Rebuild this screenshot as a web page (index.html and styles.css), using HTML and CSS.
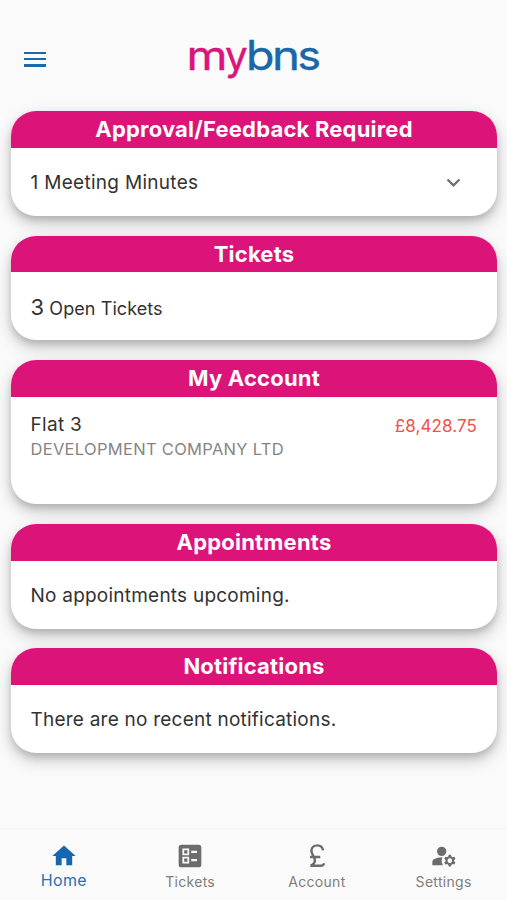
FILE: index.html
```html
<!DOCTYPE html>
<html lang="en">
<head>
<meta charset="utf-8">
<meta name="viewport" content="width=device-width, initial-scale=1">
<title>mybns</title>
<link rel="stylesheet" href="styles.css">
</head>
<body>
<div class="app">
  <header class="topbar">
    <button class="menu" aria-label="Menu"><span></span><span></span><span></span></button>
    <svg class="logo" viewBox="0 0 134 56" role="img">
      <text class="logo-my" y="39"><tspan x="-1.500" textLength="41" lengthAdjust="spacingAndGlyphs">m</tspan><tspan x="37">y</tspan></text>
      <text class="logo-bns" y="39"><tspan x="58" textLength="28.500" lengthAdjust="spacingAndGlyphs">b</tspan><tspan x="84" textLength="28" lengthAdjust="spacingAndGlyphs">n</tspan><tspan x="109.500" textLength="23.500" lengthAdjust="spacingAndGlyphs">s</tspan></text>
    </svg>
  </header>
  <main class="cards">
    <section class="card">
      <h2>Approval/Feedback Required</h2>
      <div class="row"><span class="meeting">1 Meeting Minutes</span>
        <svg class="chevron" viewBox="0 0 24 24"><path d="M7.41 8.59 12 13.17l4.59-4.58L18 10l-6 6-6-6z"/></svg>
      </div>
    </section>
    <section class="card">
      <h2>Tickets</h2>
      <div class="row"><span class="open"><span class="count">3</span> Open Tickets</span></div>
    </section>
    <section class="card account">
      <h2>My Account</h2>
      <div class="details">
        <div class="flat"><span class="flat-name">Flat 3</span><span class="company">DEVELOPMENT COMPANY LTD</span></div>
        <span class="amount">£8,428.75</span>
      </div>
    </section>
    <section class="card">
      <h2>Appointments</h2>
      <div class="row"><span>No appointments upcoming.</span></div>
    </section>
    <section class="card">
      <h2>Notifications</h2>
      <div class="row"><span>There are no recent notifications.</span></div>
    </section>
  </main>
  <nav class="tabs">
    <a class="tab active"><svg viewBox="0 0 24 24"><path d="M10 20v-6h4v6h5v-8h3L12 3 2 12h3v8z"/></svg><span>Home</span></a>
    <a class="tab"><svg viewBox="0 0 24 24"><path fill-rule="evenodd" d="M13 9.500h5v-2h-5v2zm0 7h5v-2h-5v2zM19.700 21.700H4.300c-1.100 0-2-.9-2-2V4.300c0-1.100.9-2 2-2h15.400c1.100 0 2 .9 2 2v15.400c0 1.100-.9 2-2 2zM5.500 11.300h5.800V5.500H5.500v5.800zm1.500-4.300h2.800v2.800H7V7zM5.500 18.500h5.800v-5.800H5.500v5.800zm1.500-4.300h2.800V17H7v-2.800z"/></svg><span>Tickets</span></a>
    <a class="tab pound"><svg viewBox="0 0 24 24"><path d="M17.200 7.200C16.700 4.400 14.900 2.900 12.400 2.900 9.300 2.900 7.200 4.900 7.200 7.600c0 3.400 3 4.700 3 8 0 2.200-1.400 3.800-3.700 4.700H15.500c1.500 0 2.200-.7 2.600-2.100M6 12.800H14.800"/></svg><span>Account</span></a>
    <a class="tab"><svg viewBox="0 0 24 24"><circle cx="10" cy="8" r="4"/><path d="M10.670 13.020C10.450 13.010 10.230 13 10 13c-2.420 0-4.680.67-6.610 1.820C2.510 15.340 2 16.320 2 17.350V20h9.260C10.470 18.870 10 17.490 10 16c0-1.070.25-2.070.67-2.980z"/><path fill-rule="evenodd" d="M20.750 16c0-.22-.03-.42-.06-.63l1.140-1.010-1-1.730-1.450.49c-.32-.27-.68-.48-1.080-.63L18 11h-2l-.3 1.490c-.4.150-.76.360-1.080.630l-1.450-.490-1 1.730 1.140 1.010c-.03.210-.06.410-.06.630s.03.420.06.630l-1.140 1.010 1 1.730 1.450-.490c.32.270.68.480 1.080.630L16 21h2l.3-1.490c.4-.15.760-.36 1.080-.63l1.450.49 1-1.730-1.140-1.010c.03-.21.06-.41.06-.63zM17 18a2 2 0 1 1 0-4 2 2 0 0 1 0 4z"/></svg><span>Settings</span></a>
  </nav>
</div>
</body>
</html>
```
FILE: styles.css
```css
* { box-sizing: border-box; }
body {
  margin: 0;
  background: #fafafa;
  font-family: Inter, "Liberation Sans", sans-serif;
  color: #323232;
}
.app { height: 900px; display: flex; flex-direction: column; overflow: hidden; }
.topbar {
  height: 111px;
  flex: none;
  display: grid;
  grid-template-columns: 1fr 134px 1fr;
  align-items: start;
  padding: 31px 22px 0 24px;
}
.menu {
  width: 22px;
  margin-top: 21px;
  padding: 0;
  border: 0;
  background: none;
  display: flex;
  flex-direction: column;
  gap: 4px;
}
.menu span { height: 2.2px; background: #1d68ad; }
.logo { width: 134px; height: 56px; overflow: visible; }
.logo text { font-size: 40.5px; stroke-width: .4px; stroke-linejoin: round; }
.logo-my { fill: #d9147a; stroke: #d9147a; }
.logo-bns { fill: #1b66a9; stroke: #1b66a9; }
.cards {
  flex: 1;
  display: flex;
  flex-direction: column;
  gap: 19.7px;
  padding: 0 10px 0 11px;
}
.card {
  height: 104.9px;
  flex: none;
  display: flex;
  flex-direction: column;
  border-radius: 25px;
  overflow: hidden;
  background: #fff;
  box-shadow: 0 7px 16px rgba(0, 0, 0, .22), 0 4px 6px rgba(0, 0, 0, .12);
}
.card.account { height: 144px; }
.card h2 {
  margin: 0;
  height: 36.7px;
  flex: none;
  background: #dc1378;
  color: #fff;
  font-size: 22px;
  font-weight: 700;
  line-height: 37px;
  letter-spacing: .2px;
  text-align: center;
}
.row {
  flex: 1;
  display: flex;
  align-items: center;
  justify-content: space-between;
  padding: 1px 32px 0 19.5px;
  font-size: 19px;
  letter-spacing: .23px;
}
.meeting { letter-spacing: .3px; }
.chevron { width: 27px; height: 27px; margin-right: -1.5px; fill: #707070; }
.open { font-size: 18px; letter-spacing: .08px; }
.count { font-size: 22px; }
.details {
  display: flex;
  justify-content: space-between;
  padding: 15px 20px 0 19.5px;
}
.flat { display: flex; flex-direction: column; }
.flat-name { font-size: 19px; line-height: 25px; letter-spacing: .3px; }
.company { font-size: 16.5px; line-height: 25px; color: #858585; letter-spacing: .3px; }
.amount { padding-top: 2px; font-size: 17px; line-height: 25px; color: #ee5347; letter-spacing: .1px; }
.tabs {
  height: 72px;
  flex: none;
  display: grid;
  grid-template-columns: repeat(4, 1fr);
  border-top: 1px solid #f4f4f4;
}
.tab {
  display: flex;
  flex-direction: column;
  align-items: center;
  padding-top: 13px;
  color: #7e7e7e;
  font-size: 14px;
  letter-spacing: .3px;
}
.tab svg { width: 28px; height: 28px; fill: #6c6c6c; }
.tab.pound svg { fill: none; stroke: #6c6c6c; stroke-width: 2.1; }
.tab span { line-height: 24px; }
.tab.active { color: #2870b2; font-size: 16px; padding-left: 1px; }
.tab.active span { line-height: 21px; }
.tab.active svg { fill: #1766b0; }
```
